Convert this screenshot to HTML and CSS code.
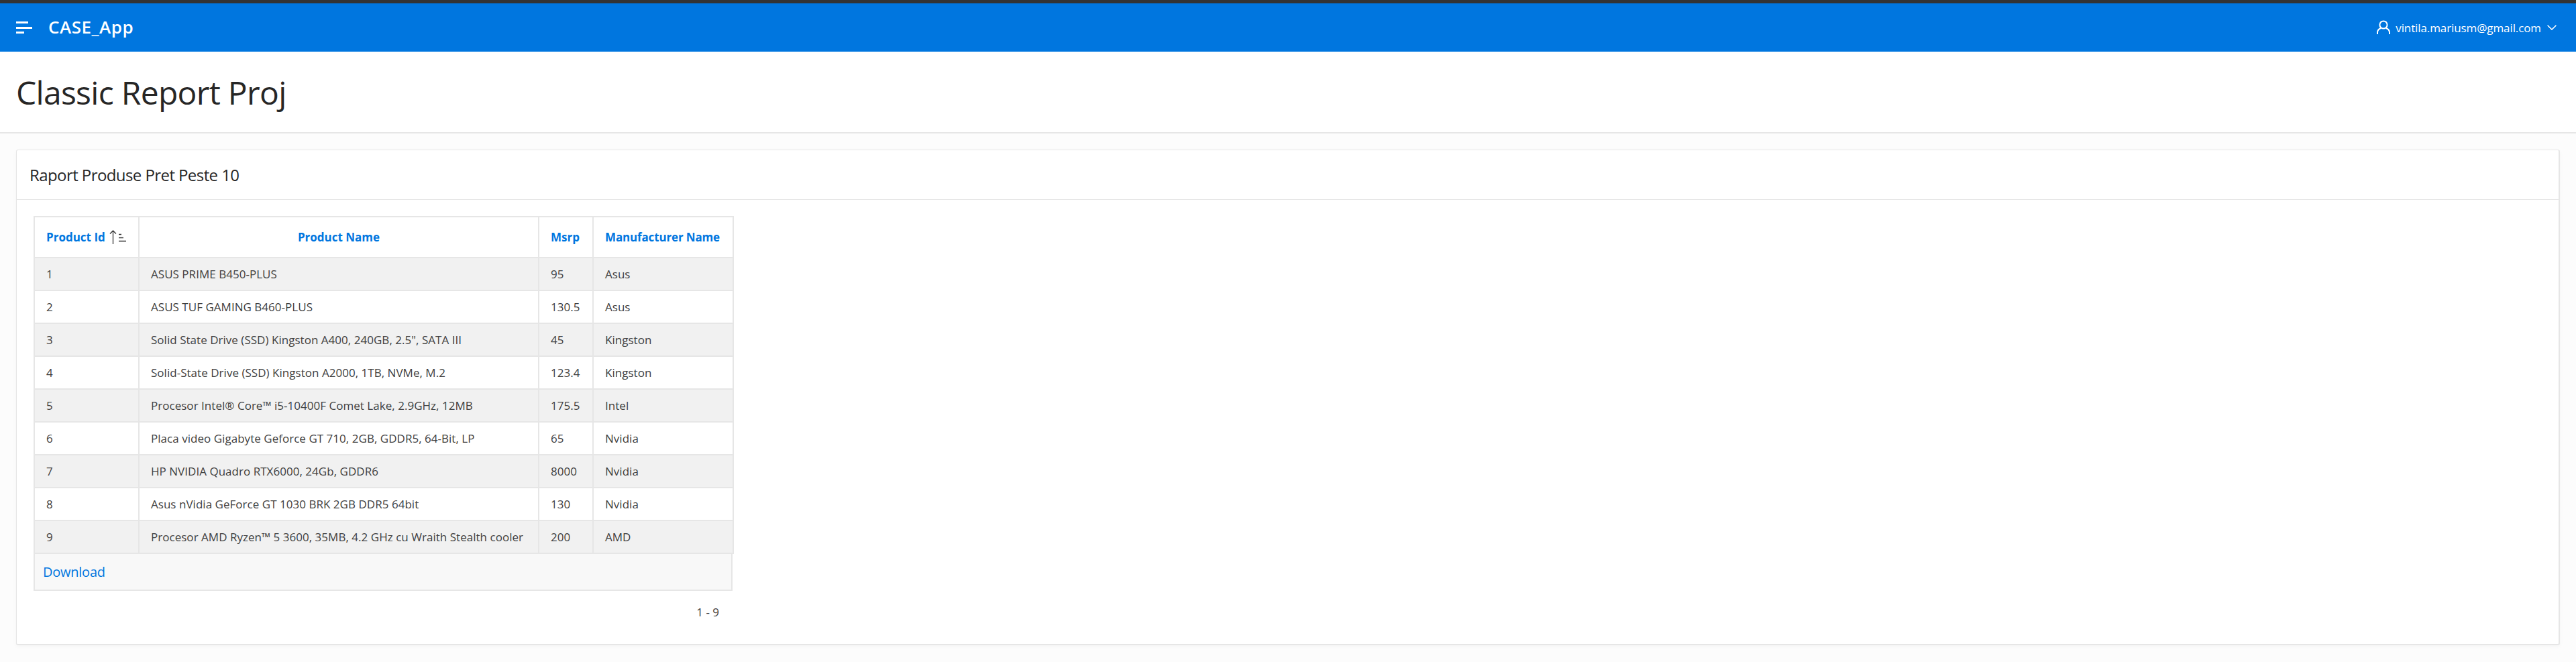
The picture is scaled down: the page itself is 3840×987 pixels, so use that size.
FILE: index.html
```html
<!DOCTYPE html>
<html>
<head>
  <title>Classic Report Proj</title>
  <link rel="stylesheet" href="styles.css">
</head>
<body>

  <header class="topbar">
    <div class="topbar-left">
      <svg class="menu-icon" width="24" height="18" viewBox="0 0 24 18">
        <rect x="0" y="0" width="18" height="3" fill="#fff"/>
        <rect x="0" y="8" width="24" height="3" fill="#fff"/>
        <rect x="0" y="15" width="12" height="3" fill="#fff"/>
      </svg>
      <span class="app-name">CASE_App</span>
    </div>
    <div class="user-menu">
      <svg class="user-icon" width="20" height="22" viewBox="0 0 20 22" fill="none" stroke="#fff" stroke-width="2">
        <circle cx="10" cy="7" r="5.6"/>
        <path d="M1 21v-2.5c0-3 2.5-5.5 5-6.5M19 21v-2.500c0-3-2.500-5.500-5-6.500"/>
      </svg>
      <span class="user-name">vintila.mariusm@gmail.com</span>
      <svg class="chevron" width="14" height="8" viewBox="0 0 14 8" fill="none" stroke="#fff" stroke-width="1.600">
        <path d="M0.600 0.800L7 7L13.400 0.800"/>
      </svg>
    </div>
  </header>

  <div class="title-bar">
    <h1>Classic Report Proj</h1>
  </div>

  <main class="content">
    <section class="region">
      <div class="region-header">
        <h2>Raport Produse Pret Peste 10</h2>
      </div>
      <div class="region-body">
        <div class="report">
          <table>
            <thead>
              <tr>
                <th class="col-id">
                  <span class="sort-head">Product Id
                    <svg class="sort-icon" width="25" height="21" viewBox="0 0 25 21" fill="none" stroke="#333" stroke-width="1.300">
                      <path d="M5.500 21V1M1 5.500L5.500 1L10 5.500"/>
                      <path d="M14 6.500H18M14 11.500H21M14 16.500H25"/>
                    </svg>
                  </span>
                </th>
                <th class="col-name">Product Name</th>
                <th class="col-msrp">Msrp</th>
                <th class="col-maker">Manufacturer Name</th>
              </tr>
            </thead>
            <tbody>
              <tr><td>1</td><td>ASUS PRIME B450-PLUS</td><td>95</td><td>Asus</td></tr>
              <tr><td>2</td><td>ASUS TUF GAMING B460-PLUS</td><td>130.5</td><td>Asus</td></tr>
              <tr><td>3</td><td>Solid State Drive (SSD) Kingston A400, 240GB, 2.5", SATA III</td><td>45</td><td>Kingston</td></tr>
              <tr><td>4</td><td>Solid-State Drive (SSD) Kingston A2000, 1TB, NVMe, M.2</td><td>123.4</td><td>Kingston</td></tr>
              <tr><td>5</td><td>Procesor Intel® Core™ i5-10400F Comet Lake, 2.9GHz, 12MB</td><td>175.5</td><td>Intel</td></tr>
              <tr><td>6</td><td>Placa video Gigabyte Geforce GT 710, 2GB, GDDR5, 64-Bit, LP</td><td>65</td><td>Nvidia</td></tr>
              <tr><td>7</td><td>HP NVIDIA Quadro RTX6000, 24Gb, GDDR6</td><td>8000</td><td>Nvidia</td></tr>
              <tr><td>8</td><td>Asus nVidia GeForce GT 1030 BRK 2GB DDR5 64bit</td><td>130</td><td>Nvidia</td></tr>
              <tr><td>9</td><td>Procesor AMD Ryzen™ 5 3600, 35MB, 4.2 GHz cu Wraith Stealth cooler</td><td>200</td><td>AMD</td></tr>
            </tbody>
          </table>
          <div class="report-links">
            <a href="#">Download</a>
          </div>
          <div class="pagination">1 - 9</div>
        </div>
      </div>
    </section>
  </main>

</body>
</html>
```

FILE: styles.css
```css
* { box-sizing: border-box; }
body {
  margin: 0;
  font-family: "Open Sans", "Noto Sans", sans-serif;
  background: #fcfcfc;
  color: #262626;
}
.topbar {
  height: 77px;
  background: #0076df;
  border-top: 5px solid #333;
  display: flex;
  align-items: center;
  justify-content: space-between;
  padding: 0 29px 0 24px;
  color: #fff;
}
.topbar-left {
  display: flex;
  align-items: center;
}
.menu-icon { margin-right: 24px; }
.app-name {
  font-size: 26px;
  font-weight: 600;
  letter-spacing: 0.5px;
  position: relative;
  top: -1px;
}
.user-menu {
  display: flex;
  align-items: center;
}
.user-icon { margin-right: 8px; }
.user-name {
  font-size: 17px;
  letter-spacing: -0.1px;
  margin-right: 9px;
}
.title-bar {
  height: 122px;
  background: #fff;
  border-bottom: 2px solid #e6e6e6;
  padding: 23px 24px 0;
}
h1 {
  margin: 0;
  font-size: 48px;
  font-weight: 400;
  line-height: 76px;
  letter-spacing: -0.7px;
}
.content {
  padding: 24px;
}
.region {
  background: #fff;
  border: 1px solid #e6e6e6;
  border-width: 1px 2px 2px 1px;
  border-radius: 3px;
  height: 739px;
  box-shadow: 0 2px 6px rgba(0,0,0,0.03);
}
.region-header {
  height: 74px;
  border-bottom: 1px solid #e6e6e6;
  padding: 0 19px;
  display: flex;
  align-items: center;
}
h2 {
  margin: 0;
  font-size: 24px;
  font-weight: 400;
  letter-spacing: -0.58px;
}
.region-body {
  padding: 24px 25px;
}
.report {
  width: 1042px;
}
table {
  width: 100%;
  border-collapse: collapse;
  table-layout: fixed;
  border: 1px solid #e6e6e6;
  background: #fff;
}
th, td {
  border: 2px solid #e6e6e6;
  border-width: 2px;
  padding: 0 17px;
  text-align: left;
  white-space: nowrap;
}
th {
  height: 61px;
  font-size: 17px;
  font-weight: 700;
  color: #0076df;
  letter-spacing: 0;
}
td {
  height: 49px;
  font-size: 17px;
  color: #404040;
  letter-spacing: 0.03px;
}
tbody tr:nth-child(odd) { background: #f1f1f1; }
.col-id { width: 156px; }
.col-name { width: 596px; text-align: center; }
.col-msrp { width: 81px; }
.col-maker { width: 209px; letter-spacing: -0.15px; }
.sort-head {
  display: flex;
  align-items: center;
  gap: 6px;
}
.sort-icon { flex: none; }
.report-links {
  height: 55px;
  background: #f8f8f8;
  border: 2px solid #e6e6e6;
  border-top: 0;
  padding: 0 12px;
  display: flex;
  align-items: center;
  font-size: 20px;
  letter-spacing: -0.25px;
}
.report-links a {
  color: #0076df;
  text-decoration: none;
}
.pagination {
  text-align: right;
  padding: 20px 20px 0 0;
  font-size: 17px;
  color: #404040;
}
```
